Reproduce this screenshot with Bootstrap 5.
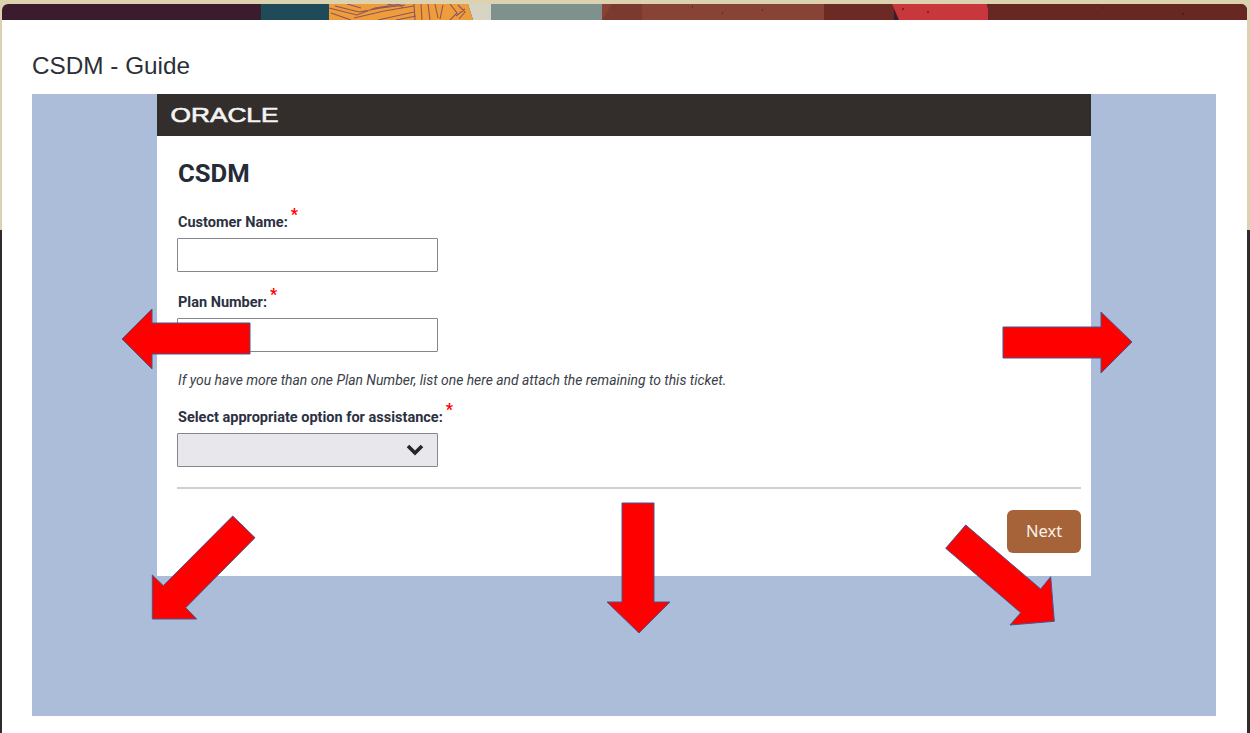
<!DOCTYPE html>
<html lang="en">
<head>
<meta charset="utf-8">
<title>CSDM - Guide</title>
<link rel="stylesheet" href="https://cdn.jsdelivr.net/npm/bootstrap@5.3.0/dist/css/bootstrap.min.css">
<style>
html,body{height:733px;overflow:hidden}
body{position:relative;background:linear-gradient(#dcd2b0 0,#dcd2b0 230px,#2f2c2b 230px);padding:4px 3px 0 2px;font-family:Roboto,sans-serif;color:#2c3142}
.app-window{background:#fff;height:729px;border-radius:6px 6px 0 0;overflow:hidden}
.top-banner{display:block;width:100%;height:16px}
.page-title{font-family:"Liberation Sans",sans-serif;font-size:24.3px;line-height:28px;color:#2b2f38;margin:32px 0 14px 30px;font-weight:400}
.blue-panel{background:#abbdd9;height:622px;margin:0 31px 0 30px}
.form-sheet{background:#fff;width:934px;height:482px;margin-left:125px}
.brand-bar{background:#332e2b;height:42px;padding-left:13px}
.brand-bar svg{display:block}
.sheet-body{padding:22px 10px 0 20px}
.sheet-title{font-size:25.7px;font-weight:700;line-height:30px;margin:0 0 26px 1px;color:#262b38}
.field-label{font-size:14.5px;font-weight:700;line-height:16px;padding-top:1px;margin:0 0 7px 1px;display:block;color:#2c3142}
.req-star{color:#f00;font-size:16px;line-height:0;font-weight:700;position:relative;top:-7px;margin-left:-1px}
.field-input.form-control,.field-input.form-select{width:261px;height:34px;border:1px solid #85878c;border-radius:1px;padding:4px 8px}
.field-input.form-select{background-color:#e8e7ec;background-size:18px 12px;background-position:right 13px center;background-image:url("data:image/svg+xml,%3Csvg xmlns='http://www.w3.org/2000/svg' viewBox='0 0 18 12'%3E%3Cpath d='M2 2l7 7 7-7' fill='none' stroke='%23262626' stroke-width='3.6'/%3E%3C/svg%3E")}
.field-gap{margin-bottom:22px}
.hint-text{font-size:13.9px;font-style:italic;line-height:16px;margin:20px 0 21px 1px;color:#3a4048}
.form-rule{border:0;border-top:2px solid #cfcfcf;opacity:1;margin:20px 0 21px 0}
.next-btn.btn{background:#a6633a;border:0;color:#f8f2e6;width:74px;height:43px;border-radius:6px;font-family:"Noto Sans",sans-serif;font-size:16.5px;padding:0}
.arrow-layer{position:absolute;left:0;top:0;pointer-events:none}
.arrow-layer polygon{fill:#f00;stroke:#41598f;stroke-width:1}
</style>
</head>
<body>
<div class="app-window">
  <svg class="top-banner" viewBox="0 0 1245 16" preserveAspectRatio="none" aria-hidden="true">
    <rect width="1245" height="16" fill="#3b1c2e"/>
    <rect x="259" width="72" height="16" fill="#1f4b58"/>
    <polygon points="327,0 466,0 471,16 327,16" fill="#ef9d3a"/>
    <g fill="none" stroke="#8c5560" stroke-width="1.1">
      <path d="M327 4l28 7 18-7 26-4M329 9l20 7M333 2l24 6 22-4 24-3M352 14l30-7 30-5M376 16l36-8M394 16l20-4M345 0l14 4M385 0l16 3"/>
      <path d="M412 0l1 16M419 0l1 16M426 0l2 16M433 0l3 14M441 1l-3 14M448 0l7 9-7 7M456 1l7 7-6 7M463 5l-9 7"/>
    </g>
    <polygon points="466,0 489,0 489,16 471,16" fill="#d6d4c2"/>
    <rect x="489" width="112" height="16" fill="#7f918d"/>
    <rect x="600" width="225" height="16" fill="#874436"/>
    <polygon points="600,16 610,0 640,0 640,16" fill="#7a3a30"/>
    <rect x="822" width="70" height="16" fill="#6b2b24"/>
    <polygon points="890,0 985,0 988,16 897,16" fill="#c8373c"/>
    <rect x="986" width="259" height="16" fill="#672822"/>
    <path d="M690 3h1M720 9h1M760 6h1M900 5h2M925 8h2M1100 4h1M1180 10h2" stroke="#2a1512"/>
  </svg>
  <h1 class="page-title">CSDM - Guide</h1>
  <div class="blue-panel">
    <div class="form-sheet">
      <div class="brand-bar d-flex align-items-center">
        <svg width="110" height="24" viewBox="0 0 110 24" role="img" aria-label="ORACLE"><text x="0.5" y="18.5" font-family="Liberation Sans, sans-serif" font-size="19.5" fill="#f4f4f2" stroke="#f4f4f2" stroke-width="0.6" textLength="108" lengthAdjust="spacingAndGlyphs">ORACLE</text></svg>
      </div>
      <div class="sheet-body">
        <h2 class="sheet-title">CSDM</h2>
        <form>
          <div class="field-gap">
            <label class="field-label">Customer Name:<span class="req-star"> *</span></label>
            <input class="form-control field-input" type="text">
          </div>
          <div>
            <label class="field-label">Plan Number:<span class="req-star"> *</span></label>
            <input class="form-control field-input" type="text">
          </div>
          <p class="hint-text">If you have more than one Plan Number, list one here and attach the remaining to this ticket.</p>
          <div>
            <label class="field-label">Select appropriate option for assistance:<span class="req-star"> *</span></label>
            <select class="form-select field-input"><option></option></select>
          </div>
          <hr class="form-rule">
          <div class="d-flex justify-content-end"><button type="button" class="btn next-btn">Next</button></div>
        </form>
      </div>
    </div>
  </div>
</div>
<svg class="arrow-layer" width="1250" height="733" viewBox="0 0 1250 733" aria-hidden="true">
  <polygon points="122,339 152,309 152,323 250,323 250,354 152,354 152,369"/>
  <polygon points="1003,327 1101,327 1101,312 1132,342 1101,373 1101,358 1003,358"/>
  <polygon points="622,503 654,503 654,602 670,602 639,633 607,602 622,602"/>
  <polygon points="232.7,516 255,537.7 185.7,607.7 196.7,619 152.3,619 152.3,575 163.3,585.7"/>
  <polygon points="965.7,525 945.7,548.3 1020.7,612.7 1010,625 1054.3,621.3 1050.7,576.7 1040.7,589"/>
</svg>
<script src="https://cdn.jsdelivr.net/npm/bootstrap@5.3.0/dist/js/bootstrap.bundle.min.js"></script>
</body>
</html>
